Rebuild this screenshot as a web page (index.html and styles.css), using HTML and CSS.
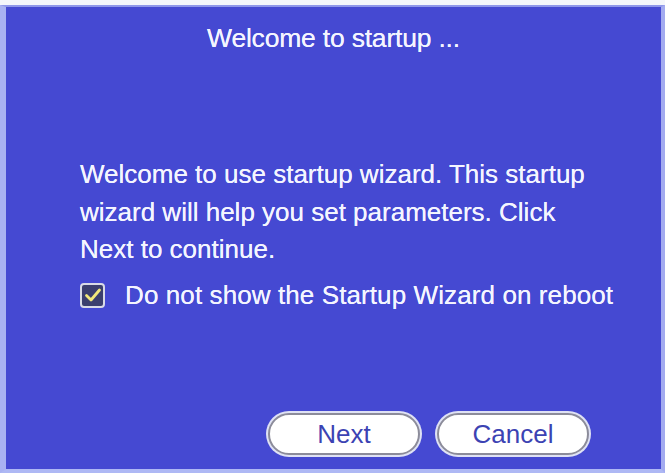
FILE: index.html
```html
<!DOCTYPE html>
<html>
<head>
<meta charset="utf-8">
<link rel="stylesheet" href="styles.css">
</head>
<body>
<div class="dialog">
  <div class="title">Welcome to startup ...</div>
  <div class="body">
    <p class="message">Welcome to use startup wizard. This startup wizard will help you set parameters. Click Next to continue.</p>
    <label class="option">
      <span class="checkbox">
        <svg viewBox="0 0 20 20" width="20" height="20"><path d="M3.5 10.5 L8 15 L16.5 5" fill="none" stroke="#f2e97a" stroke-width="2.8" stroke-linecap="round" stroke-linejoin="round"/></svg>
      </span>
      <span class="option-text">Do not show the Startup Wizard on reboot</span>
    </label>
  </div>
  <div class="actions">
    <button class="btn">Next</button>
    <button class="btn">Cancel</button>
  </div>
</div>
</body>
</html>
```
FILE: styles.css
```css
html, body {
  margin: 0;
  padding: 0;
  background: #f4f6fb;
}
body {
  width: 665px;
  height: 473px;
  padding-top: 5px;
  box-sizing: border-box;
  font-family: "Liberation Sans", Arial, sans-serif;
}
.dialog {
  height: 468px;
  box-sizing: border-box;
  background: #4549d2;
  border-top: 2px solid #8f97ea;
  border-left: 6px solid #a9b2f2;
  border-right: 4px solid #a3abf0;
  border-bottom: 4px solid #aeb8f4;
  display: flex;
  flex-direction: column;
  color: #f4f5ff;
  text-shadow: 0 0 0.6px #f4f5ff;
}
.title {
  text-align: center;
  font-size: 26.5px;
  line-height: 30px;
  padding-top: 16px;
  height: 34px;
  letter-spacing: -0.2px;
}
.body {
  padding: 99px 0 0 74px;
  flex: 1;
}
.message {
  margin: 0;
  font-size: 26px;
  line-height: 37.5px;
  width: 520px;
}
.option {
  display: flex;
  align-items: center;
  gap: 20px;
  margin-top: 11px;
}
.checkbox {
  width: 21px;
  height: 21px;
  border: 2px solid #d9dbe6;
  border-radius: 4px;
  background: #3b3f6e;
  display: flex;
  align-items: center;
  justify-content: center;
}
.option-text {
  font-size: 26px;
  letter-spacing: 0.1px;
}
.actions {
  display: flex;
  gap: 17px;
  padding: 0 0 14px 262px;
}
.btn {
  width: 152px;
  height: 42px;
  border-radius: 21px;
  background: #ffffff;
  border: 2px solid #8c8c9a;
  box-shadow: 0 0 0 2px #dfe2f4;
  color: #3c43b3;
  font-family: "Liberation Sans", Arial, sans-serif;
  font-size: 26px;
  padding: 0;
  text-shadow: none;
}
```
